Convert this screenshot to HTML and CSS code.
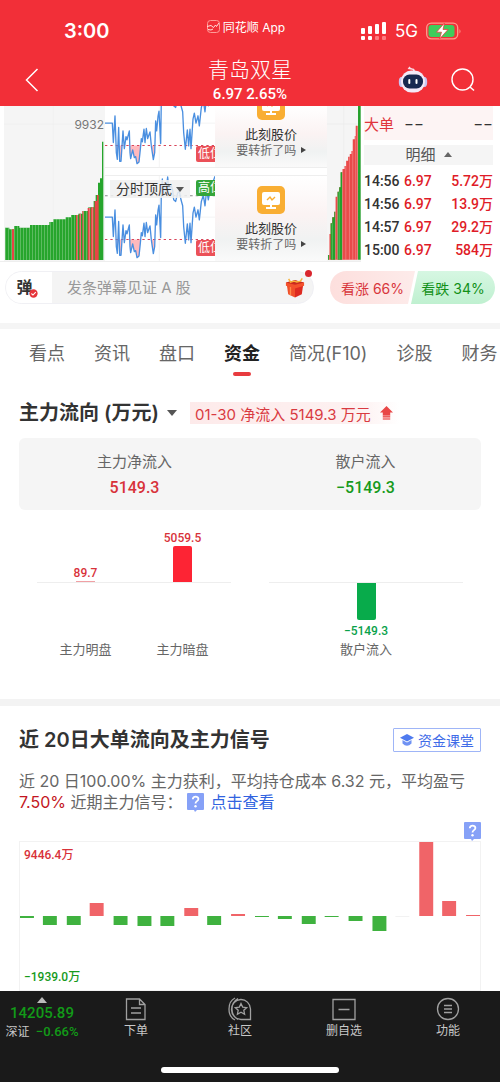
FILE: index.html
```html
<!DOCTYPE html>
<html lang="zh-CN">
<head>
<meta charset="utf-8">
<meta name="viewport" content="width=device-width, initial-scale=1">
<title>青岛双星</title>
<link rel="stylesheet" href="styles.css">
</head>
<body>
<svg class="defs" aria-hidden="true">
  <defs>
    <symbol id="wave" viewBox="315 -57 330 260" preserveAspectRatio="none">
      <path d="M315 72H645M478 -57V203" stroke="#eee" stroke-width="2" fill="none"/>
      <path d="M349 139 352 180 355 139ZM355 139 361 188 366 139ZM388 139 392 178 398 152 403 175 407 172 411 193 417 188 422 139ZM455 139 460 181 464 139Z" fill="#ffb9bd"/>
      <path d="M315 8H645" stroke="#8a8a8a" stroke-width="3" stroke-dasharray="8 9" fill="none"/>
      <path d="M315 139H645" stroke="#d8455a" stroke-width="3" stroke-dasharray="7 9" fill="none"/>
      <path d="M315 72H337L340 130 345 50 349 160 352 180 356 85 359 186 363 186 369 95 373 148 378 112 381 122 388 95 390 160 392 178 398 152 403 175 407 172 411 193 417 188 421 150 424 118 427 128 432 90 435 130 439 88 443 118 450 98 454 140 460 181 464 160 467 65 470 95 474 52 477 36 482 133 484 0 487 -42 490 0 494 -30 497 0 503 -48 507 -10 514 -22 518 -8 521 20 527 25 533 0 538 -5 543 20 548 38 551 100 556 150 562 92 566 140 570 90 573 148 579 60 583 42 588 72 594 50 598 80 604 25 610 6 615 38 620 -10 625 20 632 -20 638 -30 645 -50" stroke="#4a8fe0" stroke-width="4" stroke-linejoin="round" fill="none"/>
    </symbol>
    <symbol id="monitor" viewBox="0 0 28 28">
      <rect width="28" height="28" rx="5" fill="#f9ae33"/>
      <rect x="5" y="6" width="18" height="13" rx="2" fill="#fff"/>
      <path d="M13 19h2v2h4v2H9v-2h4z" fill="#fff"/>
      <path d="M10 14l3-3 2 3 3-3" stroke="#f9ae33" stroke-width="1.4" fill="none"/>
    </symbol>
    <symbol id="help" viewBox="0 0 17 19">
      <path d="M1 0h15a1 1 0 0 1 1 1v15a1 1 0 0 1-1 1h-6l-2 2-1-2H1a1 1 0 0 1-1-1V1a1 1 0 0 1 1-1z" fill="#86a1f7"/>
      <path d="M5.8 6.2c0-3.600 5.600-3.400 5.600-.2 0 2.200-2.900 2.100-2.900 4.400" stroke="#fff" stroke-width="1.800" fill="none"/>
      <circle cx="8.500" cy="13.200" r="1.200" fill="#fff"/>
    </symbol>
    <pattern id="stripes" width="9" height="10" patternUnits="userSpaceOnUse">
      <path d="M8 0V10" stroke="#fff" stroke-opacity=".4" stroke-width="2"/>
    </pattern>
  </defs>
</svg>

<div class="screen">
  <header class="top">
    <div class="status">
      <span class="clock">3:00</span>
      <span class="brand">
        <svg class="brand-icon" viewBox="0 0 13 13"><rect x=".5" y=".5" width="12" height="12" rx="3" fill="none" stroke="#ff9c98"/><path d="M0 6.500l4-1 2.500 2 2-2.500 1 1.500L12 3M1 9.500l3 .5 2-1" stroke="#ffe3e0" fill="none"/></svg>
        同花顺 App
      </span>
      <span class="signals">
        <svg class="bars" viewBox="0 0 26 18"><g fill="#fff"><rect y="6" width="4" height="6" rx="1"/><rect x="7" y="4" width="4" height="8" rx="1"/><rect x="14" y="2" width="4" height="10" rx="1"/><rect x="21" y="0" width="4" height="12" rx="1"/><rect y="14" width="4" height="4" rx="1"/><rect x="7" y="14" width="4" height="4" rx="1"/></g><g fill="#ff7a7f"><rect x="14" y="14" width="4" height="4" rx="1"/><rect x="21" y="14" width="4" height="4" rx="1"/></g></svg>
        <span class="net">5G</span>
        <svg class="battery" viewBox="0 0 36 18"><rect x=".7" y="1.200" width="31" height="15.600" rx="4.500" fill="none" stroke="#ff9a8c" stroke-width="1.300"/><rect x="2.500" y="3" width="26" height="12" rx="3" fill="#3fcb5b"/><path d="M33.500 7v4.500q2-2.200 0-4.500z" fill="#ff9a8c"/><path d="M18.500 1 10.500 10.200h5L13.500 17l8.500-9.500h-5z" fill="#fff" stroke="#ef2f38" stroke-width=".7"/></svg>
      </span>
    </div>
    <div class="titlebar">
      <button class="icon-btn back" aria-label="返回"><svg viewBox="0 0 14 24"><path d="M12.500 1 1.500 12l11 11" stroke="#fff" stroke-width="1.500" fill="none"/></svg></button>
      <div class="stock">
        <h1>青岛双星</h1>
        <p>6.97 2.65%</p>
      </div>
      <div class="actions">
        <button class="icon-btn robot" aria-label="智能助手"><svg viewBox="0 0 30 28"><path d="M16 5q0-2-2-2l-3-.5 1-1.500" stroke="#fbdde6" stroke-width="1.600" fill="none"/><ellipse cx="3.500" cy="16" rx="2.700" ry="5" fill="#c9c5f2"/><ellipse cx="26.500" cy="16" rx="2.700" ry="5" fill="#c9c5f2"/><rect x="3" y="4.500" width="24" height="22" rx="10.500" fill="#f4e9f8"/><rect x="5" y="8.500" width="20" height="14" rx="6.500" fill="#182850"/><rect x="10.300" y="13" width="2" height="5" rx="1" fill="#fff"/><rect x="17.500" y="13" width="2" height="5" rx="1" fill="#fff"/></svg></button>
        <button class="icon-btn search" aria-label="搜索"><svg viewBox="0 0 24 24"><circle cx="11.500" cy="11.500" r="10.500" fill="none" stroke="#fff" stroke-width="1.400"/><path d="M19 19l4 3.500" stroke="#fff" stroke-width="1.500"/></svg></button>
      </div>
    </div>
  </header>

  <main>
    <section class="market">
      <div class="depth depth-left">
        <svg viewBox="0 0 315 465" preserveAspectRatio="none">
          <path d="M160 0V462M12 54H315" stroke="#eee" stroke-width="2"/>
          <path d="M15 462V365H28V370H42V360H58V365H90V357H148V348H160V340H197V334H213V327H235V323H248V315H265V304H281V285H287V267H294V230H300V217H306V107H310V462Z" fill="#26a52c"/>
          <path d="M36 462V370H42V462ZM228 462V327H233V462ZM238 462V323H243V462ZM247 462V315H251V462ZM263 462V306H271V462ZM273 462V304H281V462ZM284 462V285H291V267H296V462Z" fill="#e84545"/>
          <path d="M15 462V365H28V370H42V360H58V365H90V357H148V348H160V340H197V334H213V327H235V323H248V315H265V304H281V462Z" fill="url(#stripes)"/>
        </svg>
        <span class="depth-max">9932</span>
      </div>

      <div class="panels">
        <div class="panel">
          <svg class="wave" preserveAspectRatio="none"><use href="#wave"/></svg>
          <span class="tag tag-low">低位</span>
        </div>
        <div class="panel">
          <svg class="wave" preserveAspectRatio="none"><use href="#wave"/></svg>
          <button class="mode">分时顶底 <i class="caret-down"></i></button>
          <span class="tag tag-high">高位</span>
          <span class="tag tag-low">低位</span>
        </div>
      </div>

      <div class="panels">
        <a class="promo" href="#turn">
          <svg class="promo-icon"><use href="#monitor"/></svg>
          <strong>此刻股价</strong>
          <span>要转折了吗 <i class="caret-right"></i></span>
        </a>
        <a class="promo" href="#turn">
          <svg class="promo-icon"><use href="#monitor"/></svg>
          <strong>此刻股价</strong>
          <span>要转折了吗 <i class="caret-right"></i></span>
        </a>
      </div>

      <div class="depth">
        <svg viewBox="351 18 103 465" preserveAspectRatio="none">
          <path d="M351 72H454M402 18V479" stroke="#eaeaea" stroke-width="2"/>
          <path d="M354 479V465H358V402H362V370H367V352H373V335H377V290H383V275H388V262H393V217H398V207H404V198H409V182H415V170H420V162H425V153H429V118H435V108H438V77H444V479Z" fill="#ea4a4a"/>
          <path d="M354 479V465H357V479ZM362 479V370H367V352H373V335H376V479ZM383 479V275H388V262H392V217H397V479ZM445 479V18H453V479Z" fill="#23a02b"/>
          <path d="M358 479V402M367 479V370M377 479V335M383 479V290M388 479V275M398 479V217M408 479V198M419 479V170M429 479V153M438 479V108" stroke="#fff" stroke-opacity=".5" stroke-width="1.500"/>
        </svg>
      </div>

      <div class="orders">
        <div class="big-order"><span class="big-label">大单</span><span>−−</span><span class="big-end">−−</span></div>
        <button class="detail">明细 <i class="caret-up"></i></button>
        <table class="ticks">
          <tr><td class="time">14:56</td><td class="up">6.97</td><td class="up amount">5.72万</td></tr>
          <tr><td class="time">14:56</td><td class="up">6.97</td><td class="up amount">13.9万</td></tr>
          <tr><td class="time">14:57</td><td class="up">6.97</td><td class="up amount">29.2万</td></tr>
          <tr><td class="time">15:00</td><td class="up">6.97</td><td class="up amount">584万</td></tr>
        </table>
      </div>
    </section>

    <section class="barrage">
      <div class="barrage-box">
        <button class="barrage-toggle" aria-label="弹幕">弹<svg viewBox="0 0 10 10"><circle cx="5" cy="5" r="4.600" fill="#e5343a"/><path d="M2.700 5l1.700 1.700L7.500 3.600" stroke="#fff" stroke-width="1.200" fill="none"/></svg></button>
        <input class="barrage-input" type="text" aria-label="发条弹幕" placeholder="发条弹幕见证 A 股">
        <button class="gift" aria-label="礼物"><svg viewBox="0 0 22 22"><path d="M2 8l9 3v11l-7.500-3.500z" fill="#f0502a"/><path d="M20 8l-9 3v11l7.500-3.500z" fill="#dd2a20"/><path d="M1 5.500 11 3l10 2.500V9l-10 3L1 9z" fill="#f4512c"/><path d="M1 5.500 11 8l10-2.500L11 3z" fill="#c92a20"/><path d="M4 1.500l2 3.500 4-1 3 1 4-1 2-3" stroke="#f7b23c" stroke-width="1.600" fill="none"/><path d="M6 10.500v9" stroke="#ff8b4a" stroke-width="1.500"/></svg></button>
      </div>
      <div class="votes">
        <button class="vote vote-up">看涨 66%</button>
        <button class="vote vote-down">看跌 34%</button>
      </div>
    </section>

    <nav class="tabs">
      <a href="#a">看点</a><a href="#b">资讯</a><a href="#c">盘口</a><a class="active" href="#d">资金</a><a href="#e">简况(F10)</a><a href="#f">诊股</a><a href="#g">财务</a>
    </nav>

    <section class="flow">
      <div class="flow-head">
        <h2>主力流向 (万元)</h2>
        <i class="caret-down"></i>
        <span class="chip">01-30 净流入 5149.3 万元
          <svg viewBox="0 0 14 15"><path d="M7 0l7 7h-3v3H3V7H0z" fill="#e94747"/><path d="M3 10h8v2H3z" fill="#ec6060"/><path d="M3 12h8v3H3z" fill="#f28b8b"/></svg>
        </span>
      </div>
      <dl class="summary">
        <div><dt>主力净流入</dt><dd class="red">5149.3</dd></div>
        <div><dt>散户流入</dt><dd class="green">−5149.3</dd></div>
      </dl>
      <div class="split">
        <div class="group">
          <div class="col"><div class="above"><b>89.7</b><i class="bar flat" style="height:1px"></i></div><div class="below"></div><span>主力明盘</span></div>
          <div class="col"><div class="above"><b>5059.5</b><i class="bar" style="height:37px"></i></div><div class="below"></div><span>主力暗盘</span></div>
        </div>
        <div class="group">
          <div class="col"><div class="above"></div><div class="below"><i class="bar" style="height:37px"></i><b>−5149.3</b></div><span>散户流入</span></div>
        </div>
      </div>
    </section>

    <section class="signal">
      <div class="signal-head">
        <h2>近 20日大单流向及主力信号</h2>
        <a class="course" href="#course"><svg viewBox="0 0 14 12"><path d="M7 0l7 3.700L7 7.500 0 3.700z" fill="#4f7bef"/><path d="M2.500 6v3.500Q7 14 11.500 9.500V6L7 8.500z" fill="#6f92f3"/></svg>资金课堂</a>
      </div>
      <p class="note">近 20 日100.00% 主力获利，平均持仓成本 6.32 元，平均盈亏 <span class="loss">7.50%</span> 近期主力信号： <svg class="help"><use href="#help"/></svg> <a href="#view">点击查看</a></p>
      <div class="help-row"><button class="icon-btn" aria-label="说明"><svg class="help"><use href="#help"/></svg></button></div>
      <div class="history">
        <svg viewBox="0 0 462 148" preserveAspectRatio="none">
          <g fill="#3fb23f"><rect x="0" y="74" width="14" height="2"/><rect x="23" y="74" width="14" height="9"/><rect x="47" y="74" width="14" height="9"/><rect x="94" y="74" width="14" height="9"/><rect x="118" y="74" width="14" height="10"/><rect x="141" y="74" width="14" height="10"/><rect x="188" y="74" width="14" height="9"/><rect x="236" y="74" width="14" height="1"/><rect x="259" y="74" width="14" height="3"/><rect x="283" y="74" width="14" height="8"/><rect x="306" y="74" width="14" height="1"/><rect x="330" y="74" width="14" height="5"/><rect x="354" y="74" width="14" height="15"/></g>
          <g fill="#f06468"><rect x="70" y="61" width="14" height="13"/><rect x="165" y="66" width="14" height="8"/><rect x="212" y="72" width="14" height="2"/><rect x="401" y="0" width="14" height="74"/><rect x="424" y="59" width="14" height="15"/><rect x="448" y="73" width="14" height="1"/></g>
          <rect x="377" y="74" width="14" height="1" fill="#f2f2f2"/>
        </svg>
        <div class="range"><span class="red">9446.4万</span><span class="green">−1939.0万</span></div>
      </div>
    </section>
  </main>

  <footer class="dock">
    <div class="dock-items">
      <a class="index" href="#index"><i class="caret-up"></i><b>14205.89</b><span>深证 <em>−0.66%</em></span></a>
      <a href="#order"><svg viewBox="0 0 24 24"><path d="M2.500 2h13L21 7.500V22.500H2.500zM15.500 2v5.500H21M7 11h10M7 16h10"/></svg>下单</a>
      <a href="#community"><svg viewBox="0 0 24 24"><path d="M7 1Q1 4 1 12t6 11M10 1.500Q4 5 4 12t6 10.500M22.500 22.500H13A9.500 10 0 1 1 22.500 12zM13 6.500l1.700 3.600 4 .5-2.900 2.700.8 3.900L13 15.300l-3.600 1.900.8-3.900-2.900-2.700 4-.5z"/></svg>社区</a>
      <a href="#remove"><svg viewBox="0 0 24 24"><path d="M1 2.500h22v20H1zM6.500 12.500h11"/></svg>删自选</a>
      <a href="#more"><svg viewBox="0 0 24 24"><circle cx="12" cy="12" r="10.500"/><path d="M8 8.500h8M8 12h8M8 15.500h8"/></svg>功能</a>
    </div>
    <div class="home"></div>
  </footer>
</div>
</body>
</html>
```
FILE: styles.css
```css
* { box-sizing: border-box; }
body {
  margin: 0;
  background: #fff;
  color: #333;
  font-family: Inter, "Noto Sans CJK SC", sans-serif;
  font-size: 15px;
}
h1, h2, p, dl, dd { margin: 0; }
a { color: inherit; text-decoration: none; }
button { border: 0; padding: 0; background: none; color: inherit; font: inherit; }
i, em { font-style: normal; }
svg { display: block; }
.defs { position: absolute; width: 0; height: 0; }
.screen { display: flex; flex-direction: column; min-height: 100vh; overflow: hidden; }

.caret-down, .caret-up, .caret-right { display: inline-block; border: 5px solid transparent; }
.caret-down { border-top: 6px solid #555; border-bottom: 0; }
.caret-up { border-bottom: 6px solid #666; border-top: 0; }
.caret-right { border: 3px solid transparent; border-left: 5px solid #444; border-right: 0; }

/* Header */
.top { background: #f22f38; color: #fff; height: 106px; }
.status { display: grid; grid-template-columns: 1fr auto 1fr; align-items: center; height: 54px; padding: 7px 38px 0 64px; }
.clock { font-size: 20px; font-weight: 600; }
.brand { display: flex; align-items: center; gap: 3px; padding-bottom: 8px; font-size: 12px; margin-left: -34px; }
.brand-icon { width: 13px; height: 13px; }
.signals { display: flex; align-items: center; justify-content: flex-end; gap: 8px; }
.bars { width: 26px; height: 18px; }
.net { font-size: 17px; }
.battery { width: 36px; height: 18px; }
.titlebar { display: grid; grid-template-columns: 1fr auto 1fr; align-items: center; height: 52px; padding: 0 25px; }
.back svg { width: 14px; height: 24px; }
.stock { text-align: center; }
.stock h1 { font-size: 21px; line-height: 28px; font-weight: 300; }
.stock p { font: 500 15px/20px Roboto, sans-serif; }
.actions { display: flex; justify-content: flex-end; align-items: center; gap: 23px; }
.robot svg { width: 30px; height: 28px; }
.search svg { width: 24px; height: 24px; }

/* Market strip */
.market { display: grid; grid-template-columns: 105fr 110fr 112fr 34fr 139fr; height: 156px; }
.depth { position: relative; background: #f5f5f5; border-bottom: 1px solid #eee; }
.depth-left { background: linear-gradient(90deg, #fff 4px, #f5f5f5 4px); }
.depth svg { position: absolute; width: 100%; height: 100%; }
.depth-max { position: absolute; right: 1px; top: 11px; font-size: 12px; line-height: 16px; color: #777; }
.panels { display: grid; grid-template-rows: 62px 87px; gap: 7px; min-width: 0; }
.panel { position: relative; overflow: hidden; border-bottom: 1px solid #eee; }
.panel + .panel, .promo + .promo { border-top: 1px solid #eee; }
.wave { position: absolute; bottom: 0; width: 100%; height: 87px; }
.mode { position: absolute; left: 5px; top: 4px; height: 18px; width: 80px; background: rgba(240, 240, 240, .85); font-size: 14px; line-height: 18px; white-space: nowrap; }
.mode i { margin-bottom: 2px; border-width: 5px 4px 0; }
.tag { position: absolute; right: 0; width: 19px; height: 16px; padding-left: 2px; overflow: hidden; border-radius: 2px 0 0 2px; color: #fff; font-size: 12px; line-height: 16px; white-space: nowrap; }
.tag-low { bottom: 5px; background: #eb5158; }
.tag-high { top: 4px; background: #34a53a; }
.promo { display: flex; flex-direction: column; align-items: center; justify-content: flex-end; overflow: hidden; padding-bottom: 8px; border-bottom: 1px solid #eee; background: linear-gradient(#fff, #fbf3f3 45%, #f0f2f2 75%, #fafafa); }
.promo-icon { flex: none; width: 28px; height: 28px; margin-bottom: 5px; }
.promo strong { font-size: 13px; line-height: 18px; font-weight: 400; }
.promo span { font-size: 12px; line-height: 16px; color: #666; }
.promo i { margin: 0 0 2px 1px; }
.orders { padding: 0 7px 0 3px; min-width: 0; }
.big-order { display: flex; gap: 10px; align-items: center; height: 34px; background: #fdf4f4; }
.big-label { color: #e0353c; font-size: 15px; }
.big-end { margin-left: auto; }
.detail { display: block; width: 100%; height: 20px; margin: 5px 0; background: #f5f5f5; color: #555; font-size: 15px; line-height: 20px; }
.detail i { margin: 0 0 3px 4px; border-width: 0 4px 5px; }
.ticks { width: 100%; border-collapse: collapse; font: 500 14px/23px Roboto, "Noto Sans CJK SC", sans-serif; }
.ticks td { height: 23px; padding: 0; }
.ticks .time { width: 40px; }
.up { color: #df1c28; }
.amount { text-align: right; }

/* Comment row */
.barrage { display: flex; justify-content: space-between; gap: 16px; padding: 9px 5px 19px; }
.barrage-box { flex: 1; display: flex; align-items: center; min-width: 0; height: 33px; padding-right: 8px; border: 1px solid #f0f0f4; border-radius: 17px; background: #f4f4f4; }
.barrage-toggle { display: flex; align-items: flex-end; justify-content: center; width: 46px; height: 31px; padding: 0 4px 5px 0; border-radius: 16px 0 0 16px; background: #fff; font-size: 16px; font-weight: 700; line-height: 22px; }
.barrage-toggle svg { width: 9px; height: 9px; margin-left: -4px; }
.barrage-input { flex: 1; min-width: 0; padding: 0 15px; border: 0; background: none; font: inherit; }
.barrage-input::placeholder { color: #999; }
.gift { position: relative; }
.gift svg { width: 20px; height: 21px; }
.gift::after { content: ""; position: absolute; right: -7px; top: -7px; width: 7px; height: 7px; border-radius: 50%; background: #d9262e; }
.votes { display: flex; }
.vote { height: 33px; font-size: 14px; white-space: nowrap; }
.vote-up { width: 85px; border-radius: 17px 0 0 17px; background: linear-gradient(90deg, #fddfdd, #fdebea); color: #d8363c; clip-path: polygon(0 0, 100% 0, 78px 100%, 0 100%); }
.vote-down { width: 84px; margin-left: -4px; border-radius: 0 17px 17px 0; background: linear-gradient(#d6f7e2, #bff0d0); color: #129018; clip-path: polygon(7px 0, 100% 0, 100% 100%, 0 100%); }

/* Tabs */
.tabs { display: flex; gap: 29px; height: 68px; padding: 11px 0 0 29px; border-top: 6px solid #f5f5f5; overflow: hidden; font-size: 18px; line-height: 28px; color: #666; white-space: nowrap; }
.tabs .active { display: flex; flex-direction: column; align-items: center; color: #222; font-weight: 600; }
.active::after { content: ""; width: 18px; height: 4px; margin-top: 4px; border-radius: 2px; background: #e83b3f; }

/* Fund flow */
.flow { padding: 10px 19px 40px; }
h2 { font-size: 20px; line-height: 26px; font-weight: 600; white-space: nowrap; }
.flow-head { display: flex; align-items: center; height: 24px; }
.flow-head > i { margin: 0 13px 0 8px; }
.chip { display: flex; align-items: center; gap: 9px; height: 22px; padding: 0 7px 0 5px; background: linear-gradient(90deg, #fdeaea, #fdf1f1 80%, #fff); color: #d93a41; white-space: nowrap; }
.chip svg { width: 13px; height: 14px; }
.summary { display: grid; grid-template-columns: 1fr 1fr; height: 72px; margin-top: 13px; padding-top: 13px; border-radius: 6px; background: #f5f5f5; text-align: center; }
.summary dt { line-height: 22px; color: #666; }
.summary dd { font: 500 16px/30px Roboto, sans-serif; }
.red { color: #d8323a; }
.green { color: #179a1c; }
.split { display: grid; grid-template-columns: 1fr 1fr; gap: 38px; margin: 20px 18px 0; }
.group { display: grid; grid-auto-flow: column; grid-auto-columns: 1fr; }
.col { text-align: center; font-size: 13px; line-height: 20px; color: #666; }
.above, .below { display: flex; flex-direction: column; align-items: center; }
.above { justify-content: flex-end; height: 53px; border-bottom: 1px solid #eee; color: #d8323a; }
.below { height: 56px; color: #0aa14a; }
.col b { font: 500 12px/16px Roboto, sans-serif; }
.bar { display: block; width: 19px; border-radius: 2px 2px 0 0; background: #fd2434; }
.bar.flat { border-radius: 0; background: #f0a0a4; }
.below .bar { margin-bottom: 3px; border-radius: 0 0 2px 2px; background: #08ab4b; }

/* Signals */
.signal { padding: 21px 19px 0; border-top: 7px solid #f3f3f3; }
.signal-head { display: flex; align-items: center; justify-content: space-between; }
.course { display: flex; align-items: center; gap: 4px; height: 24px; padding: 0 6px; border: 1px solid #9fb5f7; border-radius: 1px; color: #3f6ce8; font-size: 14px; }
.course svg { width: 14px; height: 12px; }
.note { margin-top: 18px; font-size: 16px; line-height: 21px; color: #666; }
.note a { margin-left: 2px; color: #3163e0; }
.loss { color: #c31622; }
.help { width: 17px; height: 19px; }
.note .help { display: inline-block; vertical-align: -4px; }
.help-row { display: flex; justify-content: flex-end; height: 28px; padding-top: 9px; }
.history { display: grid; height: 150px; border: 1px solid #f2f2f2; }
.history > * { grid-area: 1 / 1; min-width: 0; }
.history svg { width: 100%; height: 148px; }
.range { display: flex; flex-direction: column; justify-content: space-between; padding: 4px; font: 500 12px/18px Roboto, "Noto Sans CJK SC", sans-serif; }

/* Bottom bar */
.dock { margin-top: auto; height: 92px; background: #1a1a1a; color: #c8c8c8; }
.dock-items { display: grid; grid-template-columns: 84px repeat(4, 1fr); height: 74px; font-size: 12px; line-height: 18px; }
.dock-items a { display: flex; flex-direction: column; align-items: center; gap: 1px; padding-top: 6px; white-space: nowrap; }
.dock-items svg { width: 24px; height: 24px; fill: none; stroke: #a0a0a0; stroke-width: 1.3; }
.dock-items .index { gap: 0; }
.index i { border-bottom-color: #bbb; }
.index b, .index em { color: #129a18; font-family: Roboto, sans-serif; font-weight: 500; }
.index b { font-size: 15px; line-height: 20px; }
.index em { font-size: 13px; margin-left: 3px; }
.home { width: 178px; height: 6px; margin: 2px auto 0; border-radius: 3px; background: #fff; }
```
